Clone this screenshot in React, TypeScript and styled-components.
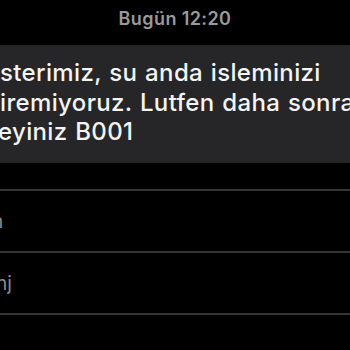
import React from "react";
import styled, { createGlobalStyle } from "styled-components";

const Global = createGlobalStyle`
  html, body { margin: 0; padding: 0; background: #000; }
  body { font-family: Inter, "Noto Sans", sans-serif; -webkit-font-smoothing: antialiased; }
`;

const Screen = styled.div`
  width: 350px;
  height: 350px;
  background: #000;
  overflow: hidden;
  display: flex;
  flex-direction: column;
`;

const Stamp = styled.div`
  height: 45px;
  box-sizing: border-box;
  padding-top: 8px;
  text-align: center;
  font-size: 18px;
  line-height: 22px;
  font-weight: 600;
  color: #9a9a9e;
  letter-spacing: 0.4px;
`;

const Bubble = styled.div`
  background: #262628;
  height: 118px;
  box-sizing: border-box;
  padding: 13px 0 0 0;
  overflow: hidden;
`;

const Line = styled.div<{ $shift?: number }>`
  font-size: 24px;
  line-height: 29.5px;
  color: #f4f4f4;
  white-space: nowrap;
  font-weight: 500;
  letter-spacing: 0.35px;
  word-spacing: 1px;
  margin-left: ${(p) => p.$shift ?? 0}px;
`;

const Gap = styled.div`
  height: 26px;
`;

const Row = styled.div<{ $indent: number }>`
  height: 60px;
  border-top: 2px solid #363638;
  display: flex;
  align-items: center;
  overflow: hidden;
  font-size: 19px;
  color: #8c8c90;
  white-space: nowrap;
  text-indent: ${(p) => p.$indent}px;
`;

const Tail = styled.div`
  border-top: 2px solid #363638;
  flex: 1;
`;

export default function App() {
  return (
    <Screen>
      <Global />
      <Stamp>Bugün 12:20</Stamp>
      <Bubble>
        <Line $shift={0}>sterimiz, su anda isleminizi</Line>
        <Line $shift={0}>iremiyoruz. Lutfen daha sonra</Line>
        <Line $shift={-2}>eyiniz B001</Line>
      </Bubble>
      <Gap />
      <Row $indent={-8}>n</Row>
      <Row $indent={-4}>nj</Row>
      <Tail />
    </Screen>
  );
}
